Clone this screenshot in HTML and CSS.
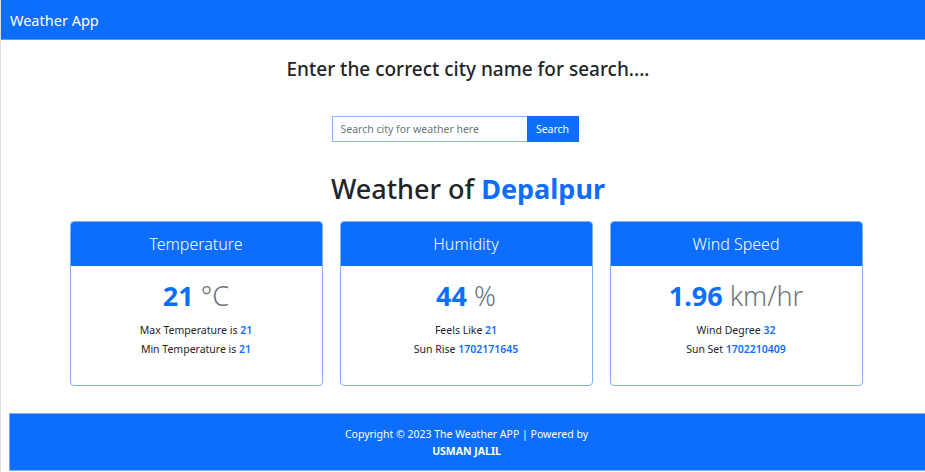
FILE: index.html
```html
<!DOCTYPE html>
<html>
<head>
<meta charset="utf-8">
<link rel="stylesheet" href="styles.css">
</head>
<body>
<nav class="navbar"><span class="brand">Weather App</span></nav>
<div class="page">
  <h2 class="prompt">Enter the correct city name for search....</h2>
  <form class="search">
    <input class="search-input" type="text" placeholder="Search city for weather here">
    <button class="search-btn" type="button">Search</button>
  </form>
  <h1 class="title">Weather of <span class="city">Depalpur</span></h1>
  <div class="cards">
    <div class="card">
      <div class="card-head">Temperature</div>
      <div class="card-body">
        <div class="big"><b>21</b> <span class="unit">°C</span></div>
        <p class="line">Max Temperature is <b>21</b></p>
        <p class="line">Min Temperature is <b>21</b></p>
      </div>
    </div>
    <div class="card">
      <div class="card-head">Humidity</div>
      <div class="card-body">
        <div class="big"><b>44</b> <span class="unit">%</span></div>
        <p class="line">Feels Like <b>21</b></p>
        <p class="line">Sun Rise <b>1702171645</b></p>
      </div>
    </div>
    <div class="card">
      <div class="card-head">Wind Speed</div>
      <div class="card-body">
        <div class="big"><b>1.96</b> <span class="unit">km/hr</span></div>
        <p class="line">Wind Degree <b>32</b></p>
        <p class="line">Sun Set <b>1702210409</b></p>
      </div>
    </div>
  </div>
  <footer class="footer">
    <p class="foot-line">Copyright © 2023 The Weather APP | Powered by</p>
    <p class="foot-name">USMAN JALIL</p>
  </footer>
</div>
</body>
</html>
```
FILE: styles.css
```css
* { box-sizing: border-box; }
html, body { margin: 0; padding: 0; }
body {
  font-family: "Noto Sans", "Open Sans", sans-serif;
  color: #212529;
  background: #fff;
  border-left: 1px solid #dcdcdc;
  width: 925px;
  height: 472px;
  overflow: hidden;
}
.navbar {
  height: 40px;
  background: #0d6efd;
  margin-left: -1px;
  display: flex;
  align-items: center;
  padding-left: 10px;
  border-bottom: 1px solid #5a9bfd;
}
.brand { color: #fff; font-size: 14.5px; }
.page {
  margin-left: 8px;
  width: 930px;
  display: flex;
  flex-direction: column;
  align-items: center;
}
.prompt {
  margin: 16px 0 0;
  font-size: 19px;
  font-weight: 500;
  padding-right: 12px;
}
.search {
  margin-top: 34px;
  display: flex;
  margin-right: 38px;
}
.search-input {
  width: 195px;
  height: 26px;
  border: 1px solid #86b7fe;
  border-right: none;
  padding: 0 8px;
  font-family: inherit;
  font-size: 10.5px;
  color: #212529;
  outline: none;
}
.search-input::placeholder { color: #6c757d; }
.search-btn {
  width: 52px;
  height: 26px;
  border: none;
  background: #0d6efd;
  color: #fff;
  font-family: inherit;
  font-size: 10.5px;
  padding: 0;
}
.title {
  margin: 28px 0 0;
  font-size: 27px;
  font-weight: 500;
  padding-right: 12px;
}
.city { color: #0d6efd; font-weight: 700; }
.cards {
  margin-top: 14px;
  display: flex;
  gap: 17px;
  padding-right: 16px;
}
.card {
  width: 253px;
  height: 165px;
  border: 1px solid #7fb0fd;
  border-radius: 4px;
  overflow: hidden;
}
.card-head {
  height: 44px;
  background: #0d6efd;
  color: #fff;
  font-size: 16px;
  display: flex;
  align-items: center;
  justify-content: center;
  font-weight: 300;
}
.card-body {
  text-align: center;
  padding-top: 11px;
}
.big { font-size: 27px; line-height: 38px; margin-bottom: 6px; }
.big b { color: #0d6efd; font-weight: 700; }
.unit { color: #6c757d; font-weight: 300; }
.line { margin: 0; font-size: 10.5px; line-height: 19px; }
.line b { color: #0d6efd; font-weight: 600; }
.footer {
  margin-top: 27px;
  align-self: flex-start;
  width: 925px;
  height: 58px;
  background: #0d6efd;
  border: 1px solid #7fb0fd;
  color: #fff;
  text-align: center;
  padding-top: 12px;
}
.foot-line { margin: 0; font-size: 10.5px; line-height: 17px; padding-right: 10px; }
.foot-name { margin: 0; font-size: 10.5px; line-height: 17px; font-weight: 700; padding-right: 10px; }
```
